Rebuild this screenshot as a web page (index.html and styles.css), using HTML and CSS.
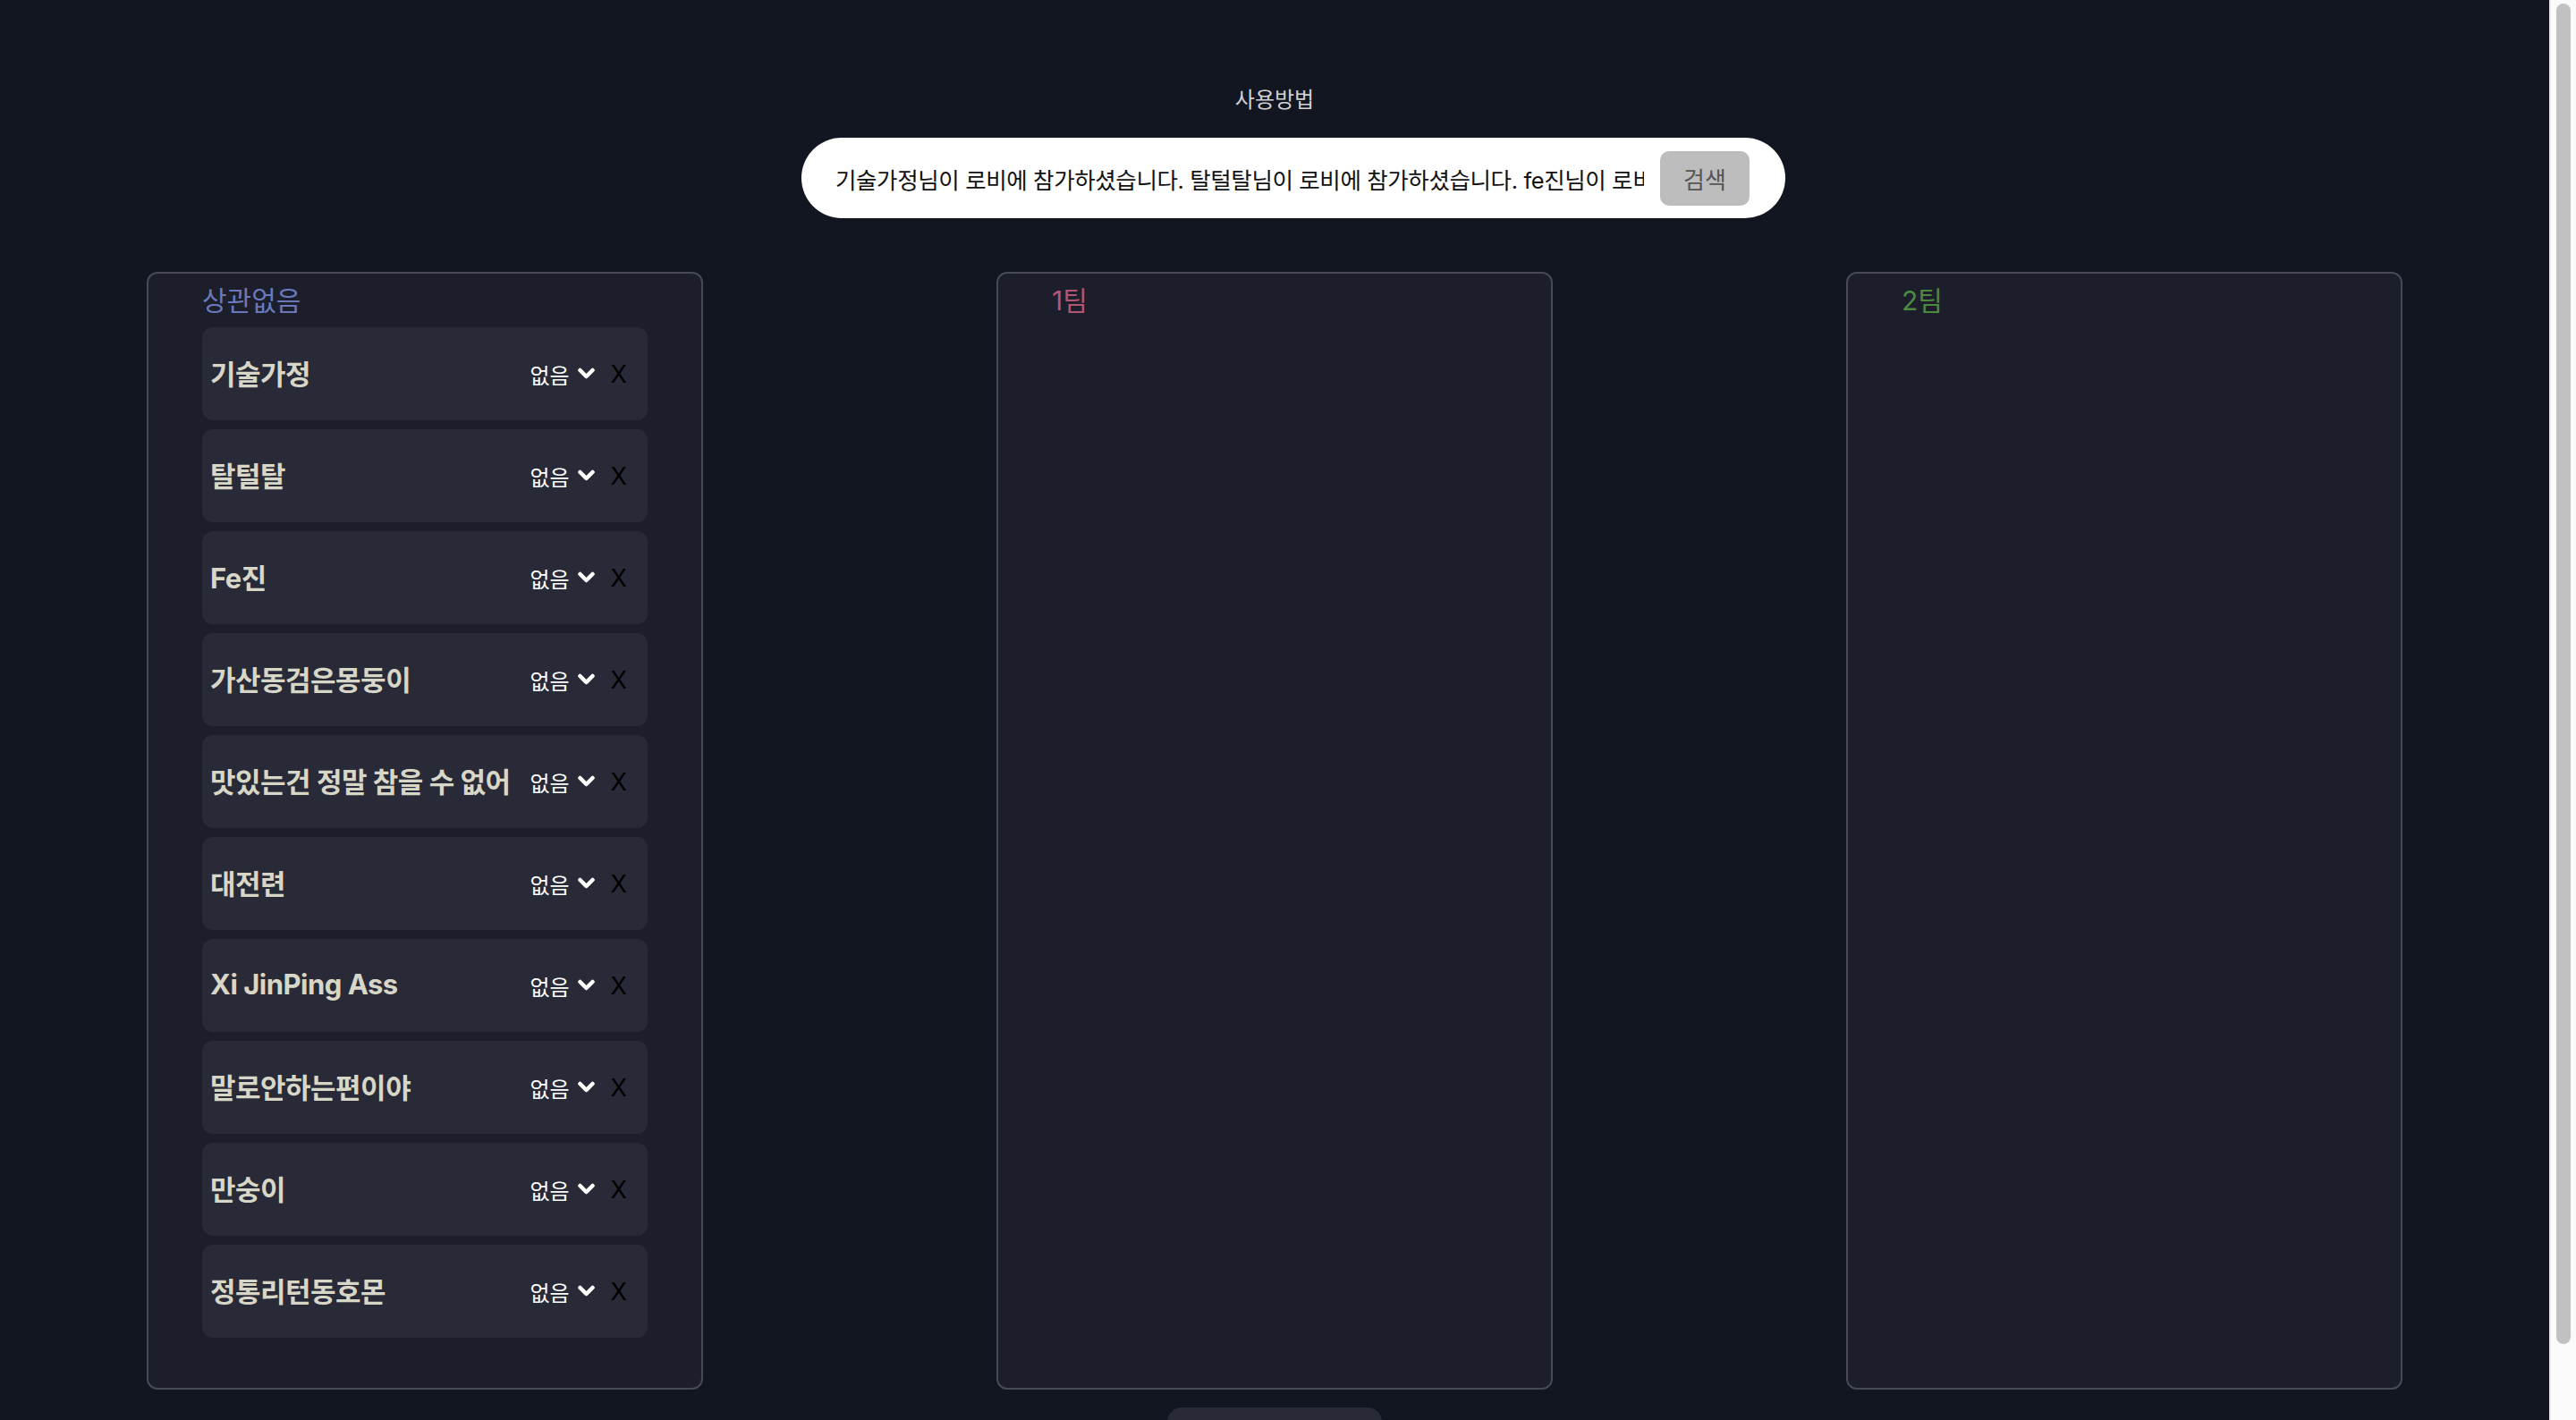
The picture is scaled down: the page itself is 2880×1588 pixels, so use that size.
FILE: index.html
```html
<!DOCTYPE html>
<html lang="ko">
<head>
<meta charset="utf-8">
<title>팀 나누기</title>
<link rel="stylesheet" href="styles.css">
</head>
<body>
<div class="page">
  <header class="help">사용방법</header>
  <form class="search">
    <input class="search-input" type="text" value="기술가정님이 로비에 참가하셨습니다. 탈털탈님이 로비에 참가하셨습니다. fe진님이 로비에 참가하셨습니다. 가산동검은몽둥이님이 로비에 참가하셨습니다.">
    <button class="search-btn" type="button">검색</button>
  </form>
  <main class="board">
    <section class="team">
      <h2 class="team-title title-none">상관없음</h2>
      <ul class="members">
        <li class="member"><span class="member-name">기술가정</span><span class="member-pos">없음<svg class="chev" viewBox="0 0 20 14"><path d="M3 3 L10 10 L17 3"/></svg></span><span class="member-remove">X</span></li>
        <li class="member"><span class="member-name">탈털탈</span><span class="member-pos">없음<svg class="chev" viewBox="0 0 20 14"><path d="M3 3 L10 10 L17 3"/></svg></span><span class="member-remove">X</span></li>
        <li class="member"><span class="member-name">Fe진</span><span class="member-pos">없음<svg class="chev" viewBox="0 0 20 14"><path d="M3 3 L10 10 L17 3"/></svg></span><span class="member-remove">X</span></li>
        <li class="member"><span class="member-name">가산동검은몽둥이</span><span class="member-pos">없음<svg class="chev" viewBox="0 0 20 14"><path d="M3 3 L10 10 L17 3"/></svg></span><span class="member-remove">X</span></li>
        <li class="member"><span class="member-name">맛있는건 정말 참을 수 없어</span><span class="member-pos">없음<svg class="chev" viewBox="0 0 20 14"><path d="M3 3 L10 10 L17 3"/></svg></span><span class="member-remove">X</span></li>
        <li class="member"><span class="member-name">대전련</span><span class="member-pos">없음<svg class="chev" viewBox="0 0 20 14"><path d="M3 3 L10 10 L17 3"/></svg></span><span class="member-remove">X</span></li>
        <li class="member"><span class="member-name">Xi JinPing Ass</span><span class="member-pos">없음<svg class="chev" viewBox="0 0 20 14"><path d="M3 3 L10 10 L17 3"/></svg></span><span class="member-remove">X</span></li>
        <li class="member"><span class="member-name">말로안하는편이야</span><span class="member-pos">없음<svg class="chev" viewBox="0 0 20 14"><path d="M3 3 L10 10 L17 3"/></svg></span><span class="member-remove">X</span></li>
        <li class="member"><span class="member-name">만숭이</span><span class="member-pos">없음<svg class="chev" viewBox="0 0 20 14"><path d="M3 3 L10 10 L17 3"/></svg></span><span class="member-remove">X</span></li>
        <li class="member"><span class="member-name">정통리턴동호몬</span><span class="member-pos">없음<svg class="chev" viewBox="0 0 20 14"><path d="M3 3 L10 10 L17 3"/></svg></span><span class="member-remove">X</span></li>
      </ul>
    </section>
    <section class="team">
      <h2 class="team-title title-one">1팀</h2>
      <ul class="members"></ul>
    </section>
    <section class="team">
      <h2 class="team-title title-two">2팀</h2>
      <ul class="members"></ul>
    </section>
  </main>
  <div class="actions"><button class="start-btn" type="button"></button></div>
</div>
<div class="scrollbar" aria-hidden="true"><div class="scrollbar-thumb"></div></div>
</body>
</html>
```
FILE: styles.css
```css
html {
  background: #121620;
}
body {
  margin: 0;
  background: #121620;
  font-family: Inter, "Noto Sans CJK KR", sans-serif;
  color: #ddd;
}
.page {
  margin-right: 30px;
  display: flex;
  flex-direction: column;
  align-items: center;
  padding-top: 92px;
  padding-bottom: 30px;
}
.scrollbar {
  position: fixed;
  top: 0;
  right: 0;
  width: 30px;
  height: 100vh;
  box-sizing: border-box;
  background: #fafafa;
  border-left: 2px solid #ececec;
  padding: 4px 6px 0;
}
.scrollbar-thumb {
  height: 1499px;
  background: #c1c1c1;
  border-radius: 8px;
}
.help {
  font-size: 24px;
  line-height: 40px;
  color: #d2d2d2;
}
.search {
  margin-top: 22px;
  margin-left: 42px;
  width: 1100px;
  height: 90px;
  box-sizing: border-box;
  background: #fff;
  border-radius: 45px;
  display: flex;
  align-items: center;
  gap: 18px;
  padding: 0 40px 0 38px;
}
.search-input {
  flex: 1;
  min-width: 0;
  border: none;
  outline: none;
  background: transparent;
  padding: 0;
  font-family: Inter, "Noto Sans CJK KR", sans-serif;
  font-size: 25.5px;
  letter-spacing: -0.4px;
  color: #111;
}
.search-btn {
  width: 100px;
  height: 61px;
  border: none;
  border-radius: 10px;
  background: #bdbdbd;
  color: #555;
  font-family: Inter, "Noto Sans CJK KR", sans-serif;
  font-size: 26px;
  padding: 0;
}
.board {
  margin-top: 60px;
  display: flex;
  gap: 328px;
  align-items: stretch;
}
.team {
  width: 622px;
  box-sizing: border-box;
  background: #1c1f2b;
  border: 2px solid #474a55;
  border-radius: 12px;
  padding: 10px 60px 56px;
}
.team-title {
  margin: 0 0 10px;
  font-weight: 400;
  font-size: 30px;
  line-height: 40px;
}
.title-none { color: #6b79bb; }
.title-one { color: #b4566f; }
.title-two { color: #4d8a40; }
.members {
  list-style: none;
  margin: 0;
  padding: 0;
  display: flex;
  flex-direction: column;
  gap: 10px;
}
.member {
  height: 104px;
  box-sizing: border-box;
  background: #282a38;
  border-radius: 12px;
  display: flex;
  align-items: center;
  padding: 0 23px 0 9px;
}
.member-name {
  flex: 1;
  font-weight: 700;
  font-size: 31px;
  color: #d8d6c6;
  white-space: nowrap;
  letter-spacing: -0.5px;
  margin-top: -4px;
}
.member-pos {
  display: flex;
  align-items: center;
  gap: 8px;
  font-size: 24px;
  color: #fff;
}
.chev {
  width: 21px;
  height: 14px;
}
.chev path {
  fill: none;
  stroke: #fff;
  stroke-width: 4.5;
  stroke-linecap: round;
  stroke-linejoin: round;
}
.member-remove {
  margin-left: 17px;
  font-size: 27px;
  color: #000;
}
.actions {
  margin-top: 20px;
}
.start-btn {
  width: 240px;
  height: 80px;
  border: none;
  border-radius: 16px;
  background: #282a38;
}
```
